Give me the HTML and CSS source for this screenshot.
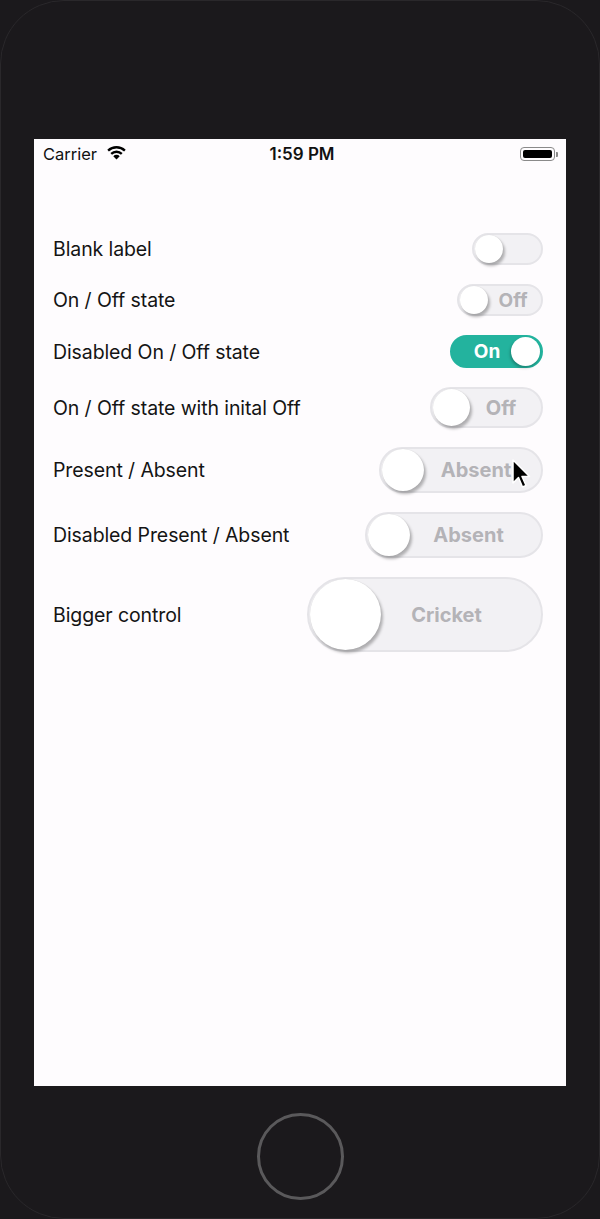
FILE: index.html
```html
<!DOCTYPE html>
<html>
<head>
<meta charset="utf-8">
<link rel="stylesheet" href="styles.css">
</head>
<body>
<div class="device">
  <div class="screen">
    <div class="statusbar">
      <div class="sb-left">
        <span class="carrier">Carrier</span>
        <svg class="wifi" width="19" height="14" viewBox="0 0 19 14">
          <path d="M9.5 13.6 L6.3 10.2 A4.5 4.5 0 0 1 12.7 10.2 Z" fill="#000"/>
          <path d="M3.4 7.1 A8.6 8.6 0 0 1 15.6 7.1 L14.0 8.8 A6.3 6.3 0 0 0 5.0 8.8 Z" fill="#000"/>
          <path d="M0.3 3.8 A13.2 13.2 0 0 1 18.7 3.8 L17.1 5.5 A10.9 10.9 0 0 0 1.9 5.5 Z" fill="#000"/>
        </svg>
      </div>
      <div class="time">1:59 PM</div>
      <div class="sb-right">
        <div class="battery"><div class="battery-fill"></div></div>
        <div class="battery-nub"></div>
      </div>
    </div>

    <div class="list">
      <div class="row">
        <span class="label">Blank label</span>
        <div class="pill t1"><div class="thumb"></div><span class="ptext"></span></div>
      </div>
      <div class="row">
        <span class="label">On / Off state</span>
        <div class="pill t2"><div class="thumb"></div><span class="ptext">Off</span></div>
      </div>
      <div class="row">
        <span class="label">Disabled On / Off state</span>
        <div class="pill t3 on"><span class="ptext">On</span><div class="thumb"></div></div>
      </div>
      <div class="row">
        <span class="label">On / Off state with inital Off</span>
        <div class="pill t4"><div class="thumb"></div><span class="ptext">Off</span></div>
      </div>
      <div class="row">
        <span class="label">Present / Absent</span>
        <div class="pill t5"><div class="thumb"></div><span class="ptext">Absent</span></div>
      </div>
      <div class="row">
        <span class="label">Disabled Present / Absent</span>
        <div class="pill t6"><div class="thumb"></div><span class="ptext">Absent</span></div>
      </div>
      <div class="row">
        <span class="label">Bigger control</span>
        <div class="pill t7"><div class="thumb"></div><span class="ptext">Cricket</span></div>
      </div>
    </div>

    <svg class="cursor" width="20" height="32" viewBox="0 0 20 32">
      <path d="M1 1 L1 24 L6.5 18.5 L10.5 28 L14 26.5 L10 17.5 L17.5 17.5 Z" fill="#000" stroke="#fff" stroke-width="1.5" stroke-linejoin="round"/>
    </svg>
  </div>
  <div class="home-area">
    <div class="home-button"></div>
  </div>
</div>
</body>
</html>
```

FILE: styles.css
```css
html, body {
  margin: 0;
  padding: 0;
  background: #1b191c;
}

.device {
  width: 600px;
  height: 1219px;
  box-sizing: border-box;
  border: 1px solid #2a282b;
  border-radius: 64px;
  background: #1b191c;
  padding-top: 138px;
  display: flex;
  flex-direction: column;
  align-items: center;
}

.screen {
  position: relative;
  width: 532px;
  height: 947px;
  background: #fefcfe;
  font-family: Inter, "Noto Sans", "Liberation Sans", sans-serif;
  color: #111;
}

.statusbar {
  height: 30px;
  display: flex;
  align-items: center;
  justify-content: space-between;
  padding: 0 8px 0 9px;
  position: relative;
  font-size: 16.5px;
}

.sb-left {
  display: flex;
  align-items: center;
  gap: 10px;
}

.carrier {
  font-weight: 400;
}

.wifi {
  display: block;
  margin-top: -2px;
}

.time {
  position: absolute;
  left: 0;
  right: 0;
  text-align: center;
  font-weight: 600;
  font-size: 17px;
  padding-left: 4px;
  pointer-events: none;
}

.sb-right {
  display: flex;
  align-items: center;
}

.battery {
  width: 35px;
  height: 14px;
  box-sizing: border-box;
  border: 1px solid #8a8a8a;
  border-radius: 4px;
  padding: 2px;
}

.battery-fill {
  width: 100%;
  height: 100%;
  background: #000;
  border-radius: 2px;
}

.battery-nub {
  width: 2px;
  height: 5px;
  background: #8a8a8a;
  border-radius: 0 1px 1px 0;
  margin-left: 1px;
}

.list {
  padding-top: 64px;
  display: flex;
  flex-direction: column;
  gap: 19px;
}

.row {
  display: flex;
  align-items: center;
  justify-content: space-between;
  padding: 0 23px 0 19px;
}

.label {
  font-size: 19.5px;
  color: #141414;
  letter-spacing: -0.1px;
}

.pill {
  box-sizing: border-box;
  border: 2px solid #e5e4e8;
  background: #f2f1f4;
  border-radius: 999px;
  display: flex;
  align-items: center;
  padding: 0 1px;
}

.thumb {
  flex: none;
  background: #fff;
  border-radius: 50%;
  box-shadow: 2px 3px 3px rgba(0, 0, 0, 0.28), 0 0 1px rgba(0, 0, 0, 0.15);
}

.ptext {
  flex: 1;
  text-align: center;
  font-weight: 700;
  font-size: 20px;
  color: #b4b3b7;
}

.t1 { width: 71px; height: 32px; }
.t1 .thumb { width: 28px; height: 28px; }

.t2 { width: 86px; height: 32px; }
.t2 .thumb { width: 28px; height: 28px; }
.t2 .ptext { padding-right: 2px; font-size: 19px; }

.t3 { width: 93px; height: 33px; }
.t3 .thumb { width: 29px; height: 29px; box-shadow: -1px 2px 3px rgba(0, 0, 0, 0.25); }
.pill.on {
  background: #23b39e;
  border-color: #23b39e;
}
.t3 .ptext { color: #fff; padding-left: 10px; font-size: 19px; }

.t4 { width: 113px; height: 41px; }
.t4 .thumb { width: 37px; height: 37px; }
.t4 .ptext { padding-right: 8px; }

.t5 { width: 164px; height: 46px; }
.t5 .thumb { width: 42px; height: 42px; }
.t5 .ptext { padding-right: 12px; }

.t6 { width: 178px; height: 46px; }
.t6 .thumb { width: 42px; height: 42px; }
.t6 .ptext { padding-right: 13px; }

.t7 { width: 236px; height: 75px; }
.t7 .thumb { width: 71px; height: 71px; }
.t7 .ptext { padding-right: 28px; font-size: 20px; }

.cursor {
  position: absolute;
  left: 478px;
  top: 320px;
}

.home-area {
  flex: 1;
  display: flex;
  justify-content: center;
  padding-top: 27px;
}

.home-button {
  width: 81px;
  height: 81px;
  border: 3px solid #5a595b;
  border-radius: 50%;
}
```
